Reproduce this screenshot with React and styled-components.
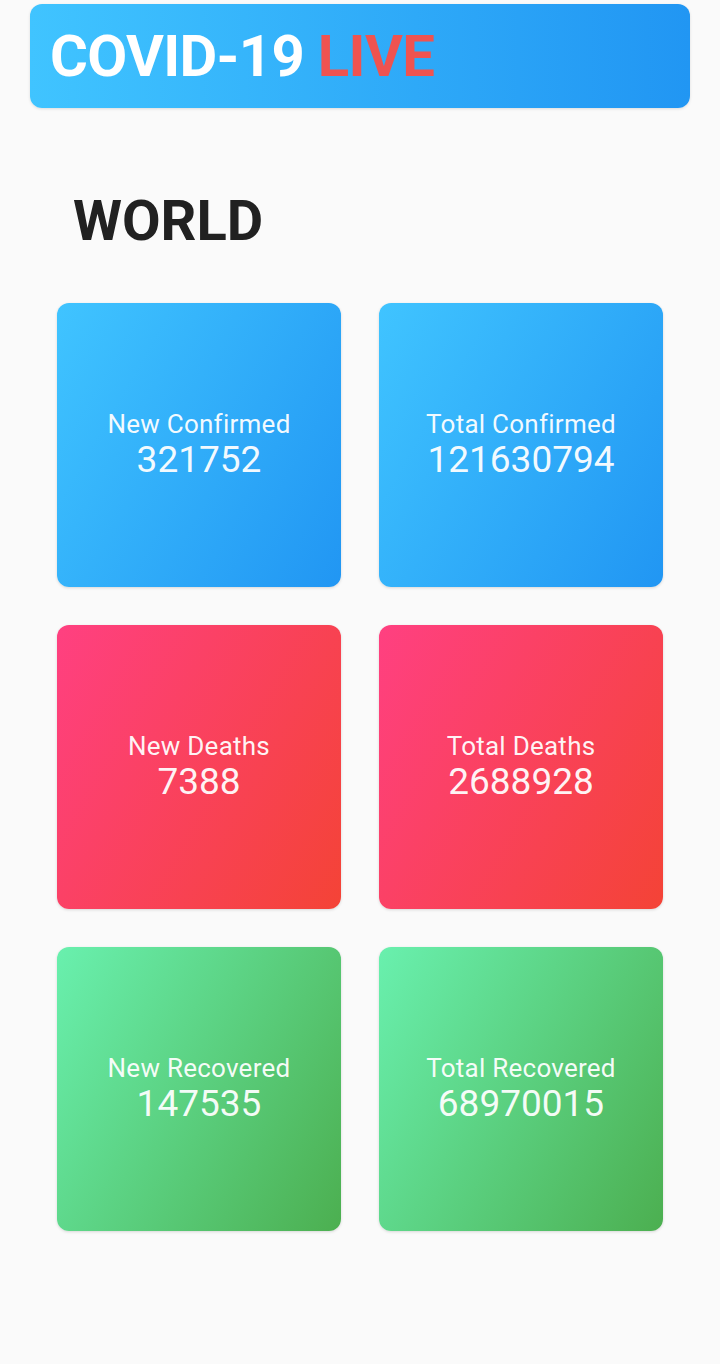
import styled, { createGlobalStyle } from "styled-components";

const GlobalStyle = createGlobalStyle`
  body {
    margin: 0;
    background: #fafafa;
    font-family: Roboto, "Liberation Sans", sans-serif;
  }
`;

const stats = [
  { label: "New Confirmed", value: 321752, tone: "blue" },
  { label: "Total Confirmed", value: 121630794, tone: "blue" },
  { label: "New Deaths", value: 7388, tone: "red" },
  { label: "Total Deaths", value: 2688928, tone: "red" },
  { label: "New Recovered", value: 147535, tone: "green" },
  { label: "Total Recovered", value: 68970015, tone: "green" },
];

const gradients = {
  blue: "linear-gradient(120deg, #40c4ff 0%, #2196f3 100%)",
  red: "linear-gradient(120deg, #ff4081 0%, #f44336 100%)",
  green: "linear-gradient(120deg, #69f0ae 0%, #4caf50 100%)",
};

export default function App() {
  return (
    <>
      <GlobalStyle />
      <Page>
        <Header>
          <Title>
            COVID-19 <Live>LIVE</Live>
          </Title>
        </Header>
        <Section>
          <Heading>WORLD</Heading>
          <Grid>
            {stats.map((s) => (
              <Card key={s.label} $tone={s.tone}>
                <Label>{s.label}</Label>
                <Value>{s.value}</Value>
              </Card>
            ))}
          </Grid>
        </Section>
      </Page>
    </>
  );
}

const Page = styled.div`
  min-height: 1364px;
  padding-top: 4px;
  box-sizing: border-box;
`;

const Header = styled.header`
  margin: 0 30px;
  height: 104px;
  border-radius: 12px;
  background: linear-gradient(90deg, #40c4ff 0%, #2196f3 100%);
  box-shadow: 0 1px 3px rgba(0, 0, 0, 0.12);
  display: flex;
  align-items: center;
  padding-left: 20px;
`;

const Title = styled.h1`
  margin: 0;
  font-size: 58px;
  font-weight: 700;
  line-height: 1;
  color: #ffffff;
  letter-spacing: -0.65px;
`;

const Live = styled.span`
  color: #ef5350;
`;

const Section = styled.section`
  padding: 0 57px;
`;

const Heading = styled.h2`
  margin: 85px 0 0 16px;
  font-size: 56px;
  font-weight: 700;
  line-height: 1;
  color: #212121;
`;

const Grid = styled.div`
  margin-top: 54px;
  display: grid;
  grid-template-columns: 284px 284px;
  grid-auto-rows: 284px;
  gap: 38px;
`;

const Card = styled.div`
  border-radius: 12px;
  background: ${(p) => gradients[p.$tone]};
  box-shadow: 0 1px 3px rgba(0, 0, 0, 0.14);
  display: flex;
  flex-direction: column;
  align-items: center;
  justify-content: center;
  color: rgba(255, 255, 255, 0.95);
`;

const Label = styled.div`
  font-size: 26px;
  line-height: 30px;
  letter-spacing: 0.25px;
`;

const Value = styled.div`
  font-size: 37px;
  line-height: 42px;
`;
